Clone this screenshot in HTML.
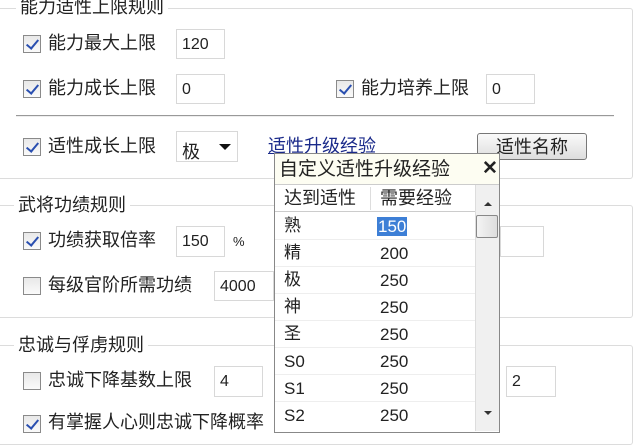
<!DOCTYPE html>
<html><head><meta charset="utf-8"><style>
*{margin:0;padding:0;box-sizing:border-box}
body{width:640px;height:430px;overflow:hidden;background:#fff;position:relative;font-family:"Liberation Sans","Noto Sans CJK SC",sans-serif;color:#222;font-size:18px}
.a{position:absolute;white-space:nowrap;line-height:1}
.box{position:absolute;border:1px solid #dcdcdc;border-radius:3px}
.cb{position:absolute;width:18px;height:18px;border:1px solid #8a8a8a;background:linear-gradient(#e8e8e8,#fafafa)}
.cb.on::after{content:"";position:absolute;left:5px;top:1px;width:5px;height:10px;border:solid #2a4fb0;border-width:0 2.5px 2.5px 0;transform:rotate(40deg)}
.in{position:absolute;border:1px solid #d8d8d8;background:#fff;font-size:16px;padding:6px 0 0 5px}
.t{position:absolute;background:#fff;padding:0 4px}
</style></head><body>
<div class="box" style="left:-4px;top:8px;width:637px;height:171px"></div>
<div class="t a" style="left:16px;top:-2px">能力适性上限规则</div>
<div class="cb on" style="left:23px;top:35px"></div><div class="a" style="left:48px;top:34px">能力最大上限</div>
<div class="in" style="left:176px;top:29px;width:49px;height:30px">120</div>
<div class="cb on" style="left:23px;top:80px"></div><div class="a" style="left:48px;top:79px">能力成长上限</div>
<div class="in" style="left:176px;top:74px;width:49px;height:30px">0</div>
<div class="cb on" style="left:336px;top:80px"></div><div class="a" style="left:361px;top:79px">能力培养上限</div>
<div class="in" style="left:486px;top:74px;width:49px;height:30px">0</div>
<div class="a" style="left:16px;top:115px;width:598px;height:2px;border-top:1px solid #999;border-bottom:1px solid #eee"></div>
<div class="cb on" style="left:23px;top:138px"></div><div class="a" style="left:48px;top:137px">适性成长上限</div>
<div class="in" style="left:176px;top:131px;width:62px;height:31px;font-size:18px;padding-top:6px">极<span style="position:absolute;left:42px;top:12px;border:6px solid transparent;border-top:6px solid #111"></span></div>
<div class="a" style="left:268px;top:137px;color:#1a2a8a;text-decoration:underline">适性升级经验</div>
<div class="a" style="left:477px;top:133px;width:110px;height:27px;border:1px solid #777;border-radius:3px;background:linear-gradient(#fafafa,#ddd);text-align:center;padding-top:4px">适性名称</div>

<div class="box" style="left:-4px;top:205px;width:637px;height:113px"></div>
<div class="t a" style="left:14px;top:196px">武将功绩规则</div>
<div class="cb on" style="left:23px;top:232px"></div><div class="a" style="left:48px;top:231px">功绩获取倍率</div>
<div class="in" style="left:176px;top:226px;width:49px;height:31px">150</div>
<div class="a" style="left:233px;top:235px;font-size:13px">%</div>
<div class="in" style="left:500px;top:226px;width:44px;height:31px"></div>
<div class="cb" style="left:23px;top:277px"></div><div class="a" style="left:48px;top:276px">每级官阶所需功绩</div>
<div class="in" style="left:214px;top:271px;width:60px;height:30px">4000</div>

<div class="box" style="left:-4px;top:345px;width:637px;height:100px"></div>
<div class="t a" style="left:14px;top:336px">忠诚与俘虏规则</div>
<div class="cb" style="left:23px;top:372px"></div><div class="a" style="left:48px;top:371px">忠诚下降基数上限</div>
<div class="in" style="left:214px;top:366px;width:49px;height:31px">4</div>
<div class="in" style="left:506px;top:366px;width:50px;height:31px">2</div>
<div class="cb on" style="left:23px;top:415px"></div><div class="a" style="left:48px;top:413px">有掌握人心则忠诚下降概率</div>

<div class="a" style="left:274px;top:153px;width:226px;height:280px;border:1px solid #888;background:#fff">
<div class="a" style="left:0;top:0;width:224px;height:31px;background:#fdfdf2;border-bottom:1px solid #ccc"></div>
<div class="a" style="left:4px;top:6px;font-size:19px">自定义适性升级经验</div>
<div class="a" style="left:207px;top:5px;font-size:19px;font-weight:bold">✕</div>
<div class="a" style="left:0;top:31px;width:200px;height:27px;border-bottom:1px solid #ccc"></div>
<div class="a" style="left:95px;top:33px;width:1px;height:23px;background:#ddd"></div>
<div class="a" style="left:9px;top:35px;font-size:18px">达到适性</div>
<div class="a" style="left:105px;top:35px;font-size:18px">需要经验</div>
<div class="a" style="left:200px;top:31px;width:24px;height:246px;background:#f0f0f0;border-left:1px solid #ddd"></div>
<div class="a" style="left:209px;top:44px;border:4px solid transparent;border-bottom:4px solid #333"></div>
<div class="a" style="left:201px;top:61px;width:22px;height:23px;border:1px solid #888;border-radius:2px;background:linear-gradient(90deg,#f4f4f4,#ddd)"></div>
<div class="a" style="left:209px;top:257px;border:4px solid transparent;border-top:4px solid #333"></div>
<div style="position:absolute;left:0;top:59px;width:200px;font-size:17px">
<div style="height:27px;position:relative;border-bottom:1px solid #eee"><span class="a" style="left:9px;top:4px">熟</span><span class="a" style="left:102px;top:4px;background:#3d7fd6;color:#fff;padding:1px 1px">150</span></div>
<div style="height:27px;position:relative;border-bottom:1px solid #eee"><span class="a" style="left:9px;top:4px">精</span><span class="a" style="left:105px;top:5px">200</span></div>
<div style="height:27px;position:relative;border-bottom:1px solid #eee"><span class="a" style="left:9px;top:4px">极</span><span class="a" style="left:105px;top:5px">250</span></div>
<div style="height:27px;position:relative;border-bottom:1px solid #eee"><span class="a" style="left:9px;top:4px">神</span><span class="a" style="left:105px;top:5px">250</span></div>
<div style="height:27px;position:relative;border-bottom:1px solid #eee"><span class="a" style="left:9px;top:4px">圣</span><span class="a" style="left:105px;top:5px">250</span></div>
<div style="height:27px;position:relative;border-bottom:1px solid #eee"><span class="a" style="left:9px;top:5px">S0</span><span class="a" style="left:105px;top:5px">250</span></div>
<div style="height:27px;position:relative;border-bottom:1px solid #eee"><span class="a" style="left:9px;top:5px">S1</span><span class="a" style="left:105px;top:5px">250</span></div>
<div style="height:27px;position:relative"><span class="a" style="left:9px;top:5px">S2</span><span class="a" style="left:105px;top:5px">250</span></div>
</div>
</div>
</body></html>
